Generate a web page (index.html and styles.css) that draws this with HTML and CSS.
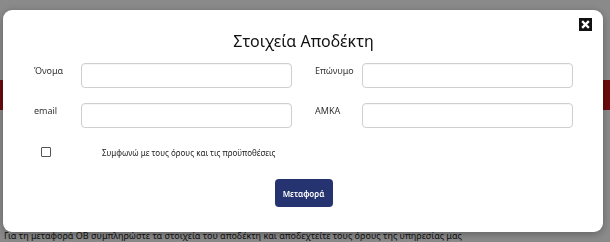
FILE: index.html
```html
<!DOCTYPE html>
<html lang="el">
<head>
  <meta charset="UTF-8">
  <meta name="viewport" content="width=device-width, initial-scale=1.0">
  <title>Στοιχεία Αποδέκτη</title>
  <link rel="stylesheet" href="styles.css">
</head>
<body>
  <div class="page">
    <div class="page-top"></div>
    <div class="page-band"></div>
    <div class="page-body">
      <p class="page-note">0</p>
      <p class="page-text">Για τη μεταφορά ΟΒ συμπληρώστε τα στοιχεία του αποδέκτη και αποδεχτείτε τους όρους της υπηρεσίας μας</p>
    </div>
  </div>

  <div class="overlay">
    <div class="modal">
      <button class="modal-close" type="button" aria-label="Κλείσιμο">
        <svg width="13" height="13" viewBox="0 0 13 13">
          <rect width="13" height="13" fill="#111"/>
          <path d="M4 4 L9 9 M9 4 L4 9" stroke="#fff" stroke-width="2.4" stroke-linecap="square"/>
        </svg>
      </button>

      <h2 class="modal-title">Στοιχεία Αποδέκτη</h2>

      <form class="recipient-form">
        <div class="form-grid">
          <div class="field">
            <label for="first-name">Όνομα</label>
            <input type="text" id="first-name">
          </div>
          <div class="field">
            <label for="last-name">Επώνυμο</label>
            <input type="text" id="last-name">
          </div>
          <div class="field">
            <label for="email">email</label>
            <input type="email" id="email">
          </div>
          <div class="field">
            <label for="amka">ΑΜΚΑ</label>
            <input type="text" id="amka">
          </div>
        </div>

        <div class="terms">
          <input type="checkbox" id="terms">
          <label for="terms">Συμφωνώ με τους όρους και τις προϋποθέσεις</label>
        </div>

        <div class="actions">
          <button type="button" class="submit-btn">Μεταφορά</button>
        </div>
      </form>
    </div>
  </div>
</body>
</html>
```

FILE: styles.css
```css
* {
  box-sizing: border-box;
}

body {
  margin: 0;
  font-family: 'Noto Sans', sans-serif;
  color: #333;
  background: #fff;
}

.page {
  height: 242px;
  overflow: hidden;
}

.page-top {
  height: 80px;
}

.page-band {
  height: 30px;
  background: #c8141c;
}

.page-body {
  padding: 0 4px;
  overflow: hidden;
}

.page-note {
  margin: 32px 0 0;
  font-size: 10px;
  line-height: 12px;
  color: #333;
}

.page-text {
  margin: 76px 0 0;
  font-size: 9px;
  line-height: 11px;
  white-space: nowrap;
  color: #222;
}

.overlay {
  position: fixed;
  inset: 0;
  background: rgba(0, 0, 0, 0.46);
  padding: 10px 7px 10px 3px;
}

.modal {
  position: relative;
  width: 600px;
  height: 222px;
  background: #fff;
  border-radius: 9px;
  box-shadow: 0 2px 8px rgba(0, 0, 0, 0.3);
  padding: 21px 30px 0 31px;
}

.modal-close {
  position: absolute;
  top: 8px;
  right: 11px;
  width: 13px;
  height: 13px;
  padding: 0;
  border: none;
  background: none;
  cursor: pointer;
}

.modal-close svg {
  display: block;
}

.modal-title {
  margin: 0;
  font-size: 16px;
  line-height: 21px;
  font-weight: 400;
  text-align: center;
  color: #111;
}

.form-grid {
  display: grid;
  grid-template-columns: 1fr 1fr;
  column-gap: 23px;
  row-gap: 15px;
  margin-top: 11px;
}

.field {
  display: flex;
  align-items: flex-start;
}

.field label {
  width: 47px;
  flex-shrink: 0;
  padding-top: 2px;
  font-size: 9px;
  line-height: 12px;
  color: #333;
}

.field input {
  flex: 1;
  height: 25px;
  border: 1px solid #cfcfcf;
  border-radius: 4px;
  box-shadow: inset 0 1px 1px rgba(0, 0, 0, 0.04);
  font-size: 10px;
  padding: 0 6px;
}

.terms {
  display: flex;
  align-items: center;
  margin-top: 19px;
  padding-left: 7px;
  height: 10px;
}

.terms input {
  appearance: none;
  width: 10px;
  height: 10px;
  margin: 0;
  border: 1px solid #555;
  border-radius: 1px;
  background: #fff;
}

.terms label {
  margin-left: 51px;
  font-size: 8px;
  color: #222;
}

.actions {
  display: flex;
  justify-content: center;
  margin-top: 22px;
}

.submit-btn {
  width: 58px;
  height: 28px;
  border: none;
  border-radius: 4px;
  background: #253470;
  color: #fff;
  font-family: 'Noto Sans', sans-serif;
  font-size: 8px;
  font-weight: 600;
  cursor: pointer;
}
```
